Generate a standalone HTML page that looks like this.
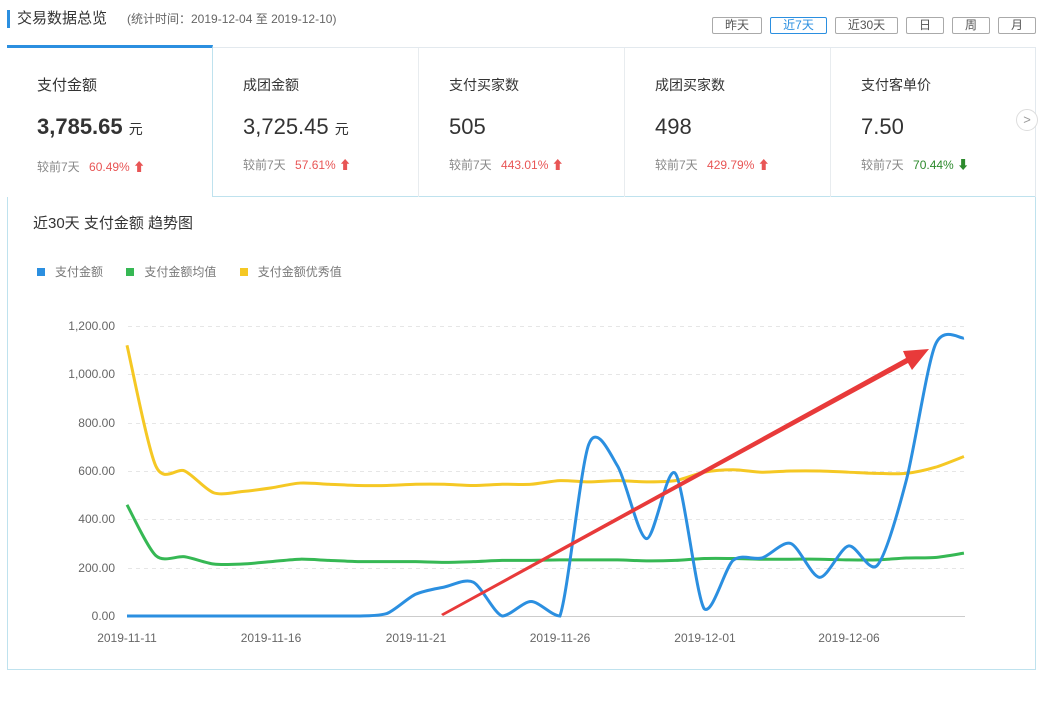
<!DOCTYPE html>
<html><head><meta charset="utf-8"><style>
*{margin:0;padding:0;box-sizing:border-box}
body{width:1050px;height:708px;background:#fff;font-family:"Liberation Sans","Noto Sans CJK SC",sans-serif;color:#333;position:relative;overflow:hidden}
.abs{position:absolute}
.title{left:7px;top:10px;border-left:3px solid #2b8fe0;padding-left:7px;font-size:15px;line-height:18px;color:#333}
.title span{font-size:12px;color:#666;margin-left:20px}
.btn{position:absolute;top:17px;height:17px;border:1px solid #aaa;border-radius:2px;font-size:12px;line-height:15px;text-align:center;color:#555}
.cards{left:7px;top:47px;width:1029px;height:150px;border:1px solid #e3e9ee;border-bottom:none}
.card{position:absolute;top:0;height:149px;border-left:1px solid #e8ecef}
.card .n{position:absolute;left:30px;top:27px;font-size:14px;color:#333}
.card .v{position:absolute;left:30px;top:66px;font-size:22px;color:#333}
.card .v small{font-size:14px}
.card .c{position:absolute;left:30px;top:108px;font-size:12px;color:#888;white-space:nowrap}
.up{color:#e85555;margin-left:6px}
.dn{color:#2d8a2d;margin-left:6px}
.panel{left:7px;top:196px;width:1029px;height:474px;border:1px solid #bfe2ee}
</style></head><body>
<div class="abs title">交易数据总览<span>(统计时间：2019-12-04 至 2019-12-10)</span></div>
<div class="btn" style="left:712px;width:50px">昨天</div>
<div class="btn" style="left:770px;width:57px;border-color:#2b8fe0;color:#2b8fe0">近7天</div>
<div class="btn" style="left:835px;width:63px">近30天</div>
<div class="btn" style="left:906px;width:38px">日</div>
<div class="btn" style="left:952px;width:38px">周</div>
<div class="btn" style="left:998px;width:38px">月</div>
<div class="abs panel"></div>
<div class="abs cards">
 <div class="card" style="left:-1px;width:206px;border-left:none;border-top:3px solid #2b8fe0;top:-3px;height:152px;border-right:1px solid #bfe2ee;background:#fff;z-index:2"><div class="n" style="top:26px;font-size:15px">支付金额</div><div class="v" style="top:66px;font-weight:bold">3,785.65 <small style="font-weight:normal">元</small></div><div class="c" style="top:110px">较前7天 <span class="up">60.49% <b>⬆</b></span></div></div>
 <div class="card" style="left:205px;width:206px;border-left:none"><div class="n">成团金额</div><div class="v">3,725.45 <small>元</small></div><div class="c">较前7天 <span class="up">57.61% <b>⬆</b></span></div></div>
 <div class="card" style="left:410px;width:206px"><div class="n">支付买家数</div><div class="v">505</div><div class="c">较前7天 <span class="up">443.01% <b>⬆</b></span></div></div>
 <div class="card" style="left:616px;width:206px"><div class="n">成团买家数</div><div class="v">498</div><div class="c">较前7天 <span class="up">429.79% <b>⬆</b></span></div></div>
 <div class="card" style="left:822px;width:206px"><div class="n">支付客单价</div><div class="v">7.50</div><div class="c">较前7天 <span class="dn">70.44% <b>⬇</b></span></div></div>
</div>
<div class="abs" style="left:1016px;top:109px;width:22px;height:22px;border:1px solid #ddd;border-radius:50%;background:#fff;color:#999;font-size:13px;line-height:19px;text-align:center">&gt;</div>
<div class="abs" style="left:33px;top:212px;font-size:15px">近30天 支付金额 趋势图</div>
<div class="abs" style="left:37px;top:263px;font-size:12px;color:#777;white-space:nowrap">
<span style="display:inline-block;width:8px;height:8px;background:#2b8fe0"></span>&nbsp;&nbsp;&nbsp;支付金额&nbsp;&nbsp;&nbsp;&nbsp;&nbsp;&nbsp;
<span style="display:inline-block;width:8px;height:8px;background:#36b854"></span>&nbsp;&nbsp;&nbsp;支付金额均值&nbsp;&nbsp;&nbsp;&nbsp;&nbsp;&nbsp;
<span style="display:inline-block;width:8px;height:8px;background:#f5c824"></span>&nbsp;&nbsp;&nbsp;支付金额优秀值</div>
<svg class="abs" style="left:0;top:0" width="1050" height="708" id="s">
<g font-size="12" fill="#666" text-anchor="end" font-family="Liberation Sans,sans-serif">
<text x="115" y="330">1,200.00</text><text x="115" y="378">1,000.00</text><text x="115" y="427">800.00</text><text x="115" y="475">600.00</text><text x="115" y="523">400.00</text><text x="115" y="572">200.00</text><text x="115" y="620">0.00</text>
</g>
<g stroke="#e6e6e6" stroke-dasharray="4,4">
<line x1="128" x2="965" y1="326.5" y2="326.5"/><line x1="128" x2="965" y1="374.5" y2="374.5"/><line x1="128" x2="965" y1="423.5" y2="423.5"/><line x1="128" x2="965" y1="471.5" y2="471.5"/><line x1="128" x2="965" y1="519.5" y2="519.5"/><line x1="128" x2="965" y1="568.5" y2="568.5"/>
</g>
<line x1="127" x2="965" y1="616.5" y2="616.5" stroke="#ccc"/>
<g font-size="12" fill="#666" text-anchor="middle" font-family="Liberation Sans,sans-serif">
<text x="127" y="642">2019-11-11</text><text x="271" y="642">2019-11-16</text><text x="416" y="642">2019-11-21</text><text x="560" y="642">2019-11-26</text><text x="705" y="642">2019-12-01</text><text x="849" y="642">2019-12-06</text>
</g>
<g fill="none" stroke-width="3" id="lines"></g>
<polygon points="441,614 443,616 908,363 912,370 929,349 903,351 906,358" fill="#e83a3a"/>
</svg>
<script>
function y(v){return 616-v*0.2417}
function x(i){return 127+i*28.86}
function path(vals,t){var p=vals.map(function(v,i){return [x(i),y(v)]});var d="M"+p[0][0]+","+p[0][1];
for(var i=0;i<p.length-1;i++){var p0=p[i-1]||p[i],p1=p[i],p2=p[i+1],p3=p[i+2]||p2;
var a1=p1[1]+(p2[1]-p0[1])*t,a2=p2[1]-(p3[1]-p1[1])*t;a1=Math.min(a1,616);a2=Math.min(a2,616);
d+=" C"+(p1[0]+(p2[0]-p0[0])*t)+","+a1+" "+(p2[0]-(p3[0]-p1[0])*t)+","+a2+" "+p2[0]+","+p2[1];}return d;}
var Y=[1120,620,600,510,515,530,550,545,540,540,545,545,540,545,545,560,555,560,555,560,595,605,595,600,600,595,590,590,615,660];
var G=[460,250,245,215,215,225,235,230,225,225,225,222,225,230,230,232,232,232,228,230,238,238,235,235,235,232,232,240,242,260];
var B=[0,0,0,0,0,0,0,0,0,10,90,120,140,0,60,0,710,620,320,590,30,230,240,300,160,290,210,560,1120,1150];
var g=document.getElementById("lines"),ns="http://www.w3.org/2000/svg";
[[Y,"#f5c824"],[G,"#36b854"],[B,"#2b8fe0"]].forEach(function(a){var e=document.createElementNS(ns,"path");e.setAttribute("d",path(a[0],0.14));e.setAttribute("stroke",a[1]);g.appendChild(e);});
</script>
</body></html>
